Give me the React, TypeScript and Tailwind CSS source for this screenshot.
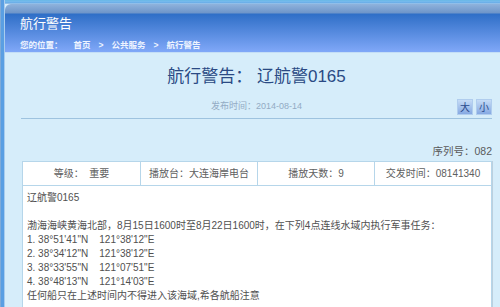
import React from 'react';

// Info cells in the top row of the notice table
const infoCells = ['等级：  重要', '播放台：大连海岸电台', '播放天数：9', '交发时间：08141340'];

// Body lines of the warning
const bodyLines = [
    '辽航警0165',
    '',
    '渤海海峡黄海北部，8月15日1600时至8月22日1600时，在下列4点连线水域内执行军事任务：',
    '1. 38°51\'41"N    121°38\'12"E',
    '2. 38°34\'12"N    121°38\'12"E',
    '3. 38°33\'55"N    121°07\'51"E',
    '4. 38°48\'13"N    121°14\'03"E',
    '任何船只在上述时间内不得进入该海域,希各航船注意',
];

const App: React.FC = () => {
    return (
        <div
            className="w-[500px] h-[307px] overflow-hidden flex bg-[#d6edfa]"
            style={{ fontFamily: '"Liberation Sans", "Noto Sans CJK SC", sans-serif' }}
        >
            {/* left blue strip */}
            <div className="w-[5px] shrink-0 border-l border-[#7fabd9] bg-[#5a9fe3] border-r border-r-[#a9cdee]" />

            <div className="flex-1 flex flex-col min-w-0">
                {/* top band */}
                <div className="h-[4px] shrink-0 bg-[linear-gradient(to_bottom,#4aa8e0_0px,#8fcaf0_1px,#5aa8e8_2px,#a2c6ea_4px)]" />

                {/* header */}
                <div className="h-[49px] shrink-0 rounded-tl-[6px] bg-[linear-gradient(to_bottom,#8fb3dc_0px,#6e95c9_9px,#2f6fc7_10px,#80a8f8_48px)] border-b border-[#c4def6] pl-[15px] pt-[12px] flex flex-col">
                    <div className="text-white text-[13px] leading-[16px]">航行警告</div>
                    <div className="mt-[7px] flex items-center text-[8.5px] leading-[12px] text-[#eef4ff] font-semibold">
                        <span>您的位置：</span>
                        <span className="ml-[11px]">首页</span>
                        <span className="mx-[8px]">&gt;</span>
                        <span>公共服务</span>
                        <span className="mx-[8px]">&gt;</span>
                        <span>航行警告</span>
                    </div>
                </div>

                {/* main */}
                <div className="flex-1 flex flex-col pl-[16px] pr-[8px]">
                    <div className="mt-[12px] text-center text-[17px] leading-[24px] text-[#2a4a84]">航行警告：&nbsp;辽航警0165</div>

                    <div className="mt-[10px] grid grid-cols-[1fr_auto_1fr] items-center h-[16px]">
                        <div />
                        <div className="text-[9px] text-[#93abc4]">发布时间：2014-08-14</div>
                        <div className="flex justify-end gap-[3px]">
                            <button className="w-[16px] h-[16px] flex items-center justify-center text-[10px] text-[#2a4a8c] bg-[linear-gradient(to_bottom,#c6dcf6,#86a9e2)] border border-[#b0cdee]">大</button>
                            <button className="w-[16px] h-[16px] flex items-center justify-center text-[10px] text-[#2a4a8c] bg-[linear-gradient(to_bottom,#c6dcf6,#86a9e2)] border border-[#b0cdee]">小</button>
                        </div>
                    </div>

                    <div className="mt-[3px] border-t border-[#9ec3df]" />

                    <div className="mt-[25px] text-right text-[10.5px] leading-[14px] text-[#5a5a5a]">序列号：082</div>

                    <div className="mt-[3px] ml-[1px] bg-white border border-[#b6d6ea] shadow-[1px_0_0_#bcd0de]">
                        <div className="grid grid-cols-4 h-[24px] border-b border-[#b6d6ea]">
                            {infoCells.map((c, i) => (
                                <div
                                    key={i}
                                    className={`flex items-center justify-center text-[10px] text-[#606060] whitespace-pre ${i > 0 ? 'border-l border-[#b6d6ea]' : ''}`}
                                >
                                    {c}
                                </div>
                            ))}
                        </div>
                        <div className="pl-[4px] pt-[5px] pb-[10px] text-[10px] leading-[14px] text-[#505050]">
                            {bodyLines.map((l, i) => (
                                <div key={i} className="whitespace-pre h-[14px]">{l}</div>
                            ))}
                        </div>
                    </div>
                </div>
            </div>
        </div>
    );
};

export default App;
